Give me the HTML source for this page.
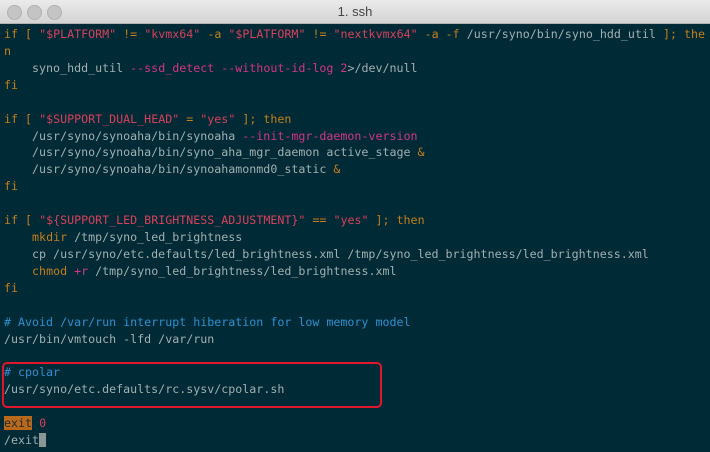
<!DOCTYPE html><html><head><style>
body{margin:0;width:710px;height:452px;overflow:hidden;background:#002b36;font-family:"DejaVu Sans Mono","Liberation Mono",monospace}
.tb{height:23px;background:linear-gradient(#ebebeb,#d4d4d4);border-bottom:1px solid #b0b0b0;position:relative;font-family:"Liberation Sans",sans-serif;font-size:13px;color:#444;text-align:center;line-height:23px}
.d{position:absolute;top:5px;width:13px;height:13px;border-radius:50%;background:#c4c4c4;border:0.5px solid #b0b0b0}
pre{margin:0;padding:0 0 0 4px;font-family:inherit;font-size:11.65px;line-height:16.92px;color:#a2afb0;position:relative;top:2px}
.o{color:#c47e1b}.p{color:#d33682}.r{color:#d8405a}.b{color:#2f8fd0}
.box{position:absolute;left:2px;top:362px;width:376px;height:42px;border:2.5px solid #e0162b;border-radius:5px}
.hl{background:#b8691c;color:#1e2a2a}
.cur{background:#8b9797;color:#002b36}
</style></head><body>
<div class="tb"><div class="d" style="left:7px"></div><div class="d" style="left:27px"></div><div class="d" style="left:47px"></div>1. ssh</div>
<pre><span class="o">if [</span> <span class="r">"$PLATFORM"</span> <span class="o">!=</span> <span class="r">"kvmx64"</span> <span class="o">-a</span> <span class="r">"$PLATFORM"</span> <span class="o">!=</span> <span class="r">"nextkvmx64"</span> <span class="o">-a -f</span> /usr/syno/bin/syno_hdd_util <span class="o">]; the
n</span>
    syno_hdd_util <span class="p">--ssd_detect --without-id-log</span> <span class="p">2</span>&gt;/dev/null
<span class="o">fi</span>

<span class="o">if [</span> <span class="r">"$SUPPORT_DUAL_HEAD"</span> <span class="o">=</span> <span class="r">"yes"</span> <span class="o">]; then</span>
    /usr/syno/synoaha/bin/synoaha <span class="p">--init-mgr-daemon-version</span>
    /usr/syno/synoaha/bin/syno_aha_mgr_daemon active_stage <span class="o">&amp;</span>
    /usr/syno/synoaha/bin/synoahamonmd0_static <span class="o">&amp;</span>
<span class="o">fi</span>

<span class="o">if [</span> <span class="r">"${SUPPORT_LED_BRIGHTNESS_ADJUSTMENT}"</span> <span class="o">==</span> <span class="r">"yes"</span> <span class="o">]; then</span>
    <span class="o">mkdir</span> /tmp/syno_led_brightness
    cp /usr/syno/etc.defaults/led_brightness.xml /tmp/syno_led_brightness/led_brightness.xml
    <span class="o">chmod</span> <span class="p">+r</span> /tmp/syno_led_brightness/led_brightness.xml
<span class="o">fi</span>

<span class="b"># Avoid /var/run interrupt hiberation for low memory model</span>
/usr/bin/vmtouch -lfd /var/run

<span class="b"># cpolar</span>
/usr/syno/etc.defaults/rc.sysv/cpolar.sh

<span class="hl">exit</span> <span class="r">0</span>
/exit<span class="cur"> </span></pre>
<div class="box"></div>
</body></html>
